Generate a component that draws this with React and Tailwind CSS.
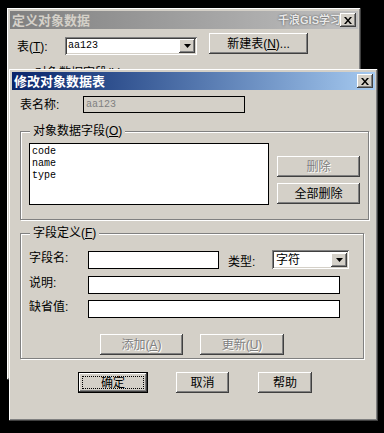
import React from "react";

const raised =
  "shadow-[inset_-1px_-1px_#404040,inset_1px_1px_#ffffff,inset_-2px_-2px_#808080]";
const sunken =
  "shadow-[inset_1px_1px_#808080,inset_-1px_-1px_#ffffff,inset_2px_2px_#404040,inset_-2px_-2px_#d4d0c8]";
const cjk = "font-['Liberation_Sans','Noto_Sans_CJK_SC',sans-serif]";
const mono = "font-['Liberation_Mono','Noto_Sans_CJK_SC',monospace]";

const Button = ({ className = "", disabled, children }) => (
  <div
    className={`flex items-center justify-center bg-[#d4d0c8] text-[12px] leading-none ${raised} ${
      disabled ? "text-[#808080] [text-shadow:1px_1px_0_#ffffff]" : "text-black"
    } ${className}`}
  >
    {children}
  </div>
);

const CloseButton = () => (
  <div className={`relative flex h-[14px] w-[16px] items-center justify-center bg-[#d4d0c8] ${raised}`}>
    <svg width="8" height="7" viewBox="0 0 8 7">
      <path d="M0 0h2l2 2.5L6 0h2L5 3.5 8 7H6L4 4.5 2 7H0l3-3.5z" fill="#000" />
    </svg>
  </div>
);

const Arrow = () => (
  <div className={`flex h-[14px] w-[16px] shrink-0 items-center justify-center bg-[#d4d0c8] ${raised}`}>
    <svg width="7" height="4" viewBox="0 0 7 4">
      <path d="M0 0h7L3.5 4z" fill="#000" />
    </svg>
  </div>
);

const GroupBox = ({ label, className = "", children }) => (
  <div
    className={`relative border border-[#808080] shadow-[inset_1px_1px_#ffffff,1px_1px_#ffffff] ${className}`}
  >
    <span className="absolute -top-[8px] left-[9px] bg-[#d4d0c8] px-[3px] text-[12px] leading-[14px]">
      {label}
    </span>
    {children}
  </div>
);

const Field = ({ className = "" }) => (
  <div className={`h-[18px] border border-black bg-white ${className}`} />
);

const Key = ({ children }) => <span className="underline">{children}</span>;

export default function App() {
  return (
    <div className={`relative h-[433px] w-[384px] overflow-hidden bg-black text-black ${cjk}`}>
      {/* back window */}
      <div className={`absolute left-[7px] top-[8px] h-[372px] w-[354px] bg-[#d4d0c8] p-[3px] ${raised}`}>
        <div className="flex h-[18px] items-center justify-between bg-gradient-to-r from-[#808080] to-[#c0c0c0] pl-[2px] pr-[2px]">
          <span className="text-[13px] font-bold leading-none text-[#d4d0c8]">定义对象数据</span>
          <span className="ml-auto mr-[-12px] text-[11px] font-bold leading-[16px] text-[#e8e8e8] [text-shadow:0_0_2px_#404040]">
            千浪GIS学习空
          </span>
          <CloseButton />
        </div>
        <div className="flex items-start pl-[7px] pt-[4px]">
          <span className="mt-[7px] w-[48px] text-[12px] leading-[14px]">
            表(<Key>T</Key>):
          </span>
          <div className={`mt-[4px] flex h-[18px] w-[132px] items-center justify-between bg-white p-[2px] ${sunken}`}>
            <span className={`pl-[1px] text-[10px] leading-none ${mono}`}>aa123</span>
            <Arrow />
          </div>
          <Button className="ml-[12px] h-[21px] w-[99px]">
            新建表(<Key>N</Key>)...
          </Button>
        </div>
        {/* label of a group box, mostly hidden under the front window */}
        <div className="mt-[11px] h-[4px] overflow-hidden pl-[25px] text-[12px] leading-[14px]">
          对象数据字段(L)
        </div>
      </div>

      {/* front window */}
      <div className={`absolute left-[9px] top-[69px] h-[352px] w-[369px] bg-[#d4d0c8] p-[3px] ${raised}`}>
        <div className="flex h-[18px] items-center justify-between bg-gradient-to-r from-[#0a246a] to-[#a6caf0] pl-[2px] pr-[2px]">
          <span className="text-[13px] font-bold leading-none text-white">修改对象数据表</span>
          <CloseButton />
        </div>

        <div className="pl-[8px]">
          <div className="mt-[6px] flex items-center">
            <span className="w-[63px] text-[12px] leading-[14px]">表名称:</span>
            <div className="flex h-[17px] w-[162px] items-center border border-black bg-[#d4d0c8] pl-[2px]">
              <span className={`text-[10px] leading-none text-[#808080] ${mono}`}>aa123</span>
            </div>
          </div>

          <GroupBox
            label={
              <>
                对象数据字段(<Key>O</Key>)
              </>
            }
            className="mt-[18px] h-[89px] w-[349px]"
          >
            <div className="flex pl-[8px] pt-[11px]">
              <div className={`h-[62px] w-[240px] border border-black bg-white pl-[2px] pt-[2px] text-[10px] leading-[12px] ${mono}`}>
                <div>code</div>
                <div>name</div>
                <div>type</div>
              </div>
              <div className="ml-[8px] mt-[13px] flex flex-col gap-[6px]">
                <Button disabled className="h-[21px] w-[83px]">
                  删除
                </Button>
                <Button className="h-[21px] w-[83px]">全部删除</Button>
              </div>
            </div>
          </GroupBox>

          <GroupBox
            label={
              <>
                字段定义(<Key>F</Key>)
              </>
            }
            className="mt-[13px] h-[126px] w-[344px]"
          >
            <div className="pl-[8px] pt-[17px] text-[12px] leading-[14px]">
              <div className="flex items-center">
                <span className="w-[59px] self-start">字段名:</span>
                <Field className="w-[131px]" />
                <span className="ml-[9px] mt-[3px] w-[44px]">类型:</span>
                <div className={`-mt-[1px] flex h-[19px] w-[77px] items-center justify-between bg-white p-[2px] ${sunken}`}>
                  <span className="pl-[2px]">字符</span>
                  <Arrow />
                </div>
              </div>
              <div className="mt-[7px] flex items-start">
                <span className="w-[59px]">说明:</span>
                <Field className="w-[252px]" />
              </div>
              <div className="mt-[6px] flex items-start">
                <span className="w-[59px]">缺省值:</span>
                <Field className="w-[252px]" />
              </div>
              <div className="ml-[71px] mt-[16px] flex gap-[17px]">
                <Button disabled className="h-[21px] w-[83px]">
                  添加(<Key>A</Key>)
                </Button>
                <Button disabled className="h-[21px] w-[84px]">
                  更新(<Key>U</Key>)
                </Button>
              </div>
            </div>
          </GroupBox>

          <div className="mt-[13px] flex">
            <div className="relative ml-[58px] h-[21px] w-[70px] border border-black">
              <Button className="h-full w-full">确定</Button>
              <div className="absolute inset-[3px] border border-dotted border-black" />
            </div>
            <Button className="ml-[28px] h-[21px] w-[53px]">取消</Button>
            <Button className="ml-[29px] h-[21px] w-[54px]">帮助</Button>
          </div>
        </div>
      </div>
    </div>
  );
}
